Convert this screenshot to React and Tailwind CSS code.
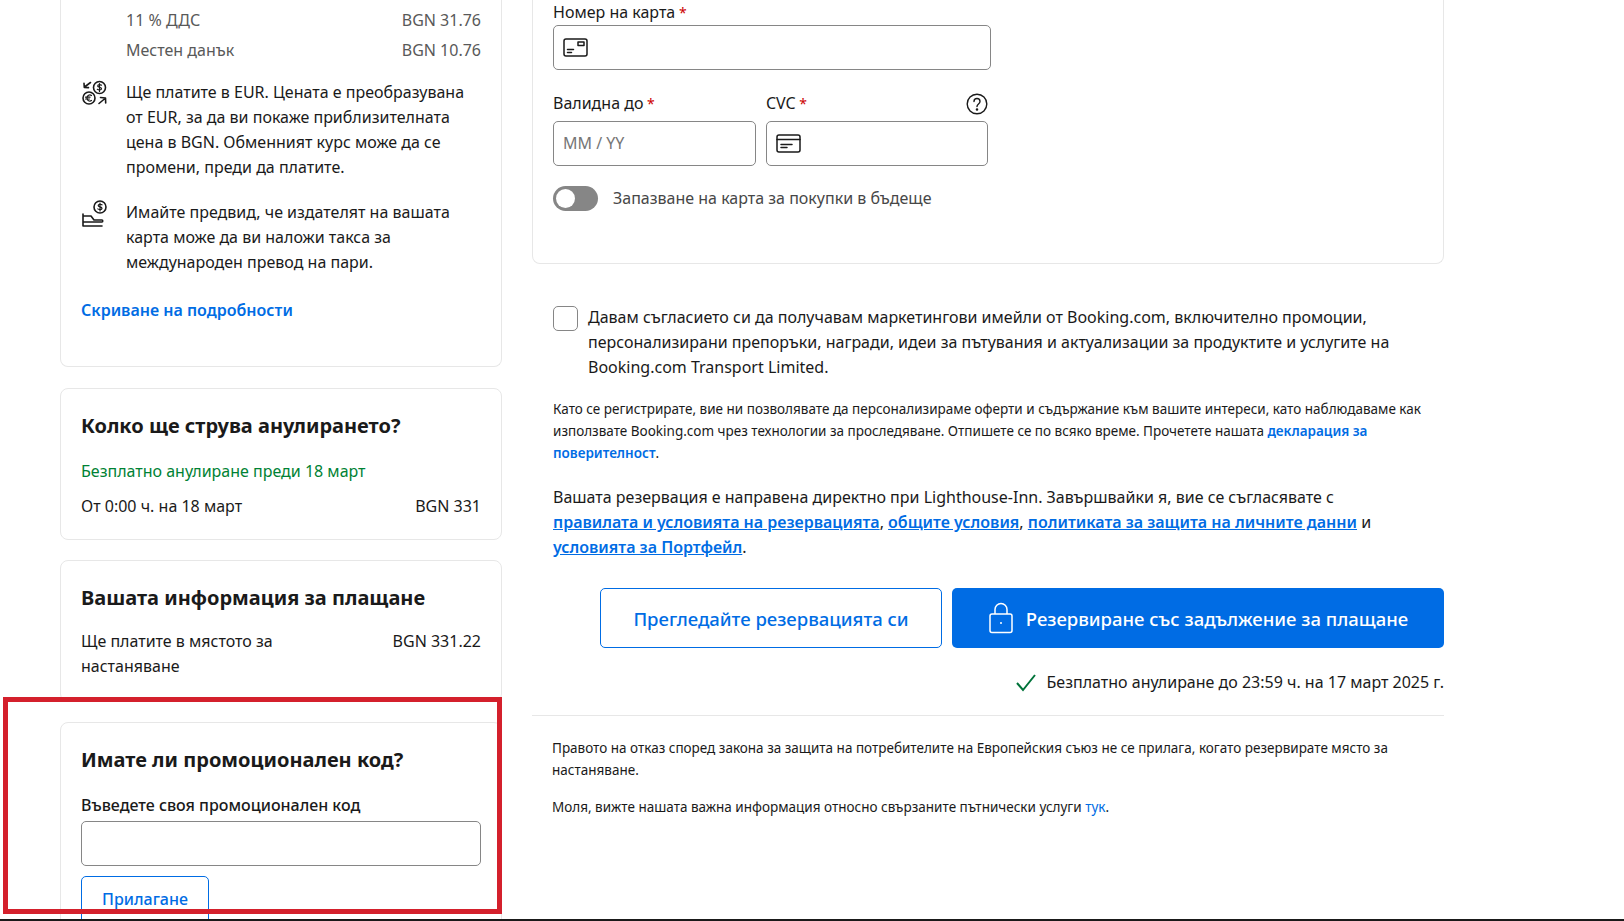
const font = { fontFamily: '"Noto Sans", sans-serif' };

const Req = () => <span className="text-[#c00] text-[14px]"> *</span>;

const LinkB = ({ children }) => (
  <a className="font-semibold text-[#006ce4] underline">{children}</a>
);

const ExchangeIcon = () => (
  <svg width="28" height="28" viewBox="0 0 28 28" fill="none" stroke="#1a1a1a" strokeWidth="1.6" strokeLinecap="round" strokeLinejoin="round">
    <circle cx="18.5" cy="7.5" r="6" />
    <path d="M20.5 5.2c-1-.9-4-.7-3.800.9.2 1.500 3.900.9 3.800 2.700-.1 1.400-3 1.500-4.200.5M18.500 3.500v8" strokeWidth="1.2" />
    <circle cx="8" cy="18" r="6" />
    <path d="M10.500 15.500c-2-1.400-4.500 0-4.500 2.500s2.500 3.900 4.500 2.500M4.500 17.200h4.500M4.500 19h4" strokeWidth="1.2" />
    <path d="M9.500 2.500l-6 4.500M3 3.200l.3 4.200 4.200.2" />
    <path d="M18 23.500l6-5M19.500 17.500l5 .5.200 5" />
  </svg>
);

const FeeIcon = () => (
  <svg width="28" height="28" viewBox="0 0 28 28" fill="none" stroke="#1a1a1a" strokeWidth="1.600" strokeLinecap="round" strokeLinejoin="round">
    <circle cx="19" cy="7" r="6" />
    <path d="M21 4.800c-1-.9-4-.7-3.800.9.2 1.500 3.900.9 3.800 2.700-.1 1.400-3 1.500-4.200.5M19 3v8" strokeWidth="1.200" />
    <path d="M2 14v12M2 16h8l3 4h8c1 0 1 2 0 2H2M2 26h19" />
  </svg>
);

const CardFrontIcon = () => (
  <svg width="26" height="20" viewBox="0 0 26 20" fill="none" stroke="#1a1a1a" strokeWidth="1.500" strokeLinecap="round" strokeLinejoin="round">
    <rect x="1" y="1" width="23" height="17" rx="2" />
    <rect x="15" y="4" width="6" height="3.500" />
    <path d="M4.500 11.500h6M4.500 14.500h4" />
  </svg>
);

const CardBackIcon = () => (
  <svg width="26" height="20" viewBox="0 0 26 20" fill="none" stroke="#1a1a1a" strokeWidth="1.500" strokeLinecap="round" strokeLinejoin="round">
    <rect x="1" y="1" width="23" height="17" rx="2" />
    <path d="M1 5.500h23M5 10.500h11M5 13.500h6" />
  </svg>
);

const HelpIcon = () => (
  <svg width="22" height="22" viewBox="0 0 22 22" fill="none" stroke="#1a1a1a" strokeWidth="1.400" strokeLinecap="round">
    <circle cx="11" cy="11" r="9.800" />
    <path d="M8 8.500c0-4 6-4 6 0 0 2.500-3 2.500-3 5" />
    <circle cx="11" cy="16.500" r=".6" fill="#1a1a1a" />
  </svg>
);

const LockIcon = () => (
  <svg width="26" height="32" viewBox="0 0 26 32" fill="none" stroke="#fff" strokeWidth="1.500" strokeLinejoin="round">
    <rect x="2" y="12" width="22" height="18.500" rx="2" />
    <path d="M7 12V7.500a6 6 0 0 1 12 0V12" />
    <circle cx="13" cy="21" r="1" fill="#fff" stroke="none" />
  </svg>
);

const CheckIcon = () => (
  <svg width="22" height="18" viewBox="0 0 22 18" fill="none" stroke="#00733a" strokeWidth="2">
    <path d="M2 9l6 7L20 1" />
  </svg>
);

const Card = ({ className = '', children }) => (
  <section className={'mx-0 rounded-lg border border-[#e7e7e7] bg-white px-[20px] ' + className}>
    {children}
  </section>
);

const PriceSummary = () => (
  <Card className="h-[367px] rounded-t-none border-t-0">
    <div className="flex justify-between pl-[45px] pt-[8px] text-[#595959]">
      <span>11 % ДДС</span>
      <span>BGN 31.76</span>
    </div>
    <div className="mt-[5px] flex justify-between pl-[45px] text-[#595959]">
      <span>Местен данък</span>
      <span>BGN 10.76</span>
    </div>
    <div className="mt-[17px] flex">
      <div className="w-[45px] shrink-0"><ExchangeIcon /></div>
      <p>Ще платите в EUR. Цената е преобразувана от EUR, за да ви покаже приблизителната цена в BGN. Обменният курс може да се промени, преди да платите.</p>
    </div>
    <div className="mt-[20px] flex">
      <div className="w-[45px] shrink-0"><FeeIcon /></div>
      <p>Имайте предвид, че издателят на вашата карта може да ви наложи такса за международен превод на пари.</p>
    </div>
    <a className="mt-[23px] block font-semibold text-[#006ce4]">Скриване на подробности</a>
  </Card>
);

const LeftColumn = () => (
  <aside className="w-[442px] shrink-0">
    <PriceSummary />
    <Card className="mt-[21px] h-[152px] pt-[22px]">
      <h2 className="text-[20px] font-bold leading-[30px]">Колко ще струва анулирането?</h2>
      <p className="mt-[18px] text-[#008234]">Безплатно анулиране преди 18 март</p>
      <div className="mt-[10px] flex justify-between">
        <span>От 0:00 ч. на 18 март</span>
        <span>BGN 331</span>
      </div>
    </Card>
    <Card className="mt-[20px] h-[142px] pt-[22px]">
      <h2 className="text-[20px] font-bold leading-[30px]">Вашата информация за плащане</h2>
      <div className="mt-[16px] flex justify-between">
        <span className="w-[240px]">Ще платите в мястото за настаняване</span>
        <span>BGN 331.22</span>
      </div>
    </Card>
    <Card className="mt-[20px] h-[220px] pt-[22px]">
      <h2 className="text-[20px] font-bold leading-[30px]">Имате ли промоционален код?</h2>
      <label className="mt-[18px] block font-medium">Въведете своя промоционален код</label>
      <div className="mt-[3px] h-[45px] rounded-[5px] border border-[#868686]" />
      <button className="mt-[10px] h-[60px] w-[128px] rounded-[5px] border border-[#006ce4] pb-[14px] font-medium text-[#006ce4]">Прилагане</button>
    </Card>
  </aside>
);

const CardForm = () => (
  <section className="h-[264px] rounded-b-lg border border-t-0 border-[#e7e7e7] px-[20px]">
    <label className="block leading-[24px]">Номер на карта<Req /></label>
    <div className="flex h-[45px] w-[438px] items-center rounded-[5px] border border-[#868686] px-[9px]"><CardFrontIcon /></div>
    <div className="mt-[21px] flex gap-[10px]">
      <div className="w-[203px]">
        <label className="block leading-[24px]">Валидна до<Req /></label>
        <div className="mt-[5px] flex h-[45px] items-center rounded-[5px] border border-[#868686] px-[9px] text-[#767676]">MM / YY</div>
      </div>
      <div className="w-[222px]">
        <div className="flex items-center justify-between">
          <label className="leading-[24px]">CVC<Req /></label>
          <HelpIcon />
        </div>
        <div className="mt-[5px] flex h-[45px] items-center rounded-[5px] border border-[#868686] px-[9px]"><CardBackIcon /></div>
      </div>
    </div>
    <div className="mt-[20px] flex items-center gap-[15px]">
      <div className="flex h-[25px] w-[45px] items-center rounded-full bg-[#868686] px-[3px]">
        <div className="h-[19px] w-[19px] rounded-full bg-white" />
      </div>
      <span className="text-[#474747]">Запазване на карта за покупки в бъдеще</span>
    </div>
  </section>
);

const RightColumn = () => (
  <main className="w-[912px] shrink-0">
    <CardForm />
    <div className="mt-[41px] flex gap-[10px] px-[21px]">
      <div className="mt-[1px] h-[25px] w-[25px] shrink-0 rounded-[5px] border border-[#868686]" />
      <p>Давам съгласието си да получавам маркетингови имейли от Booking.com, включително промоции, персонализирани препоръки, награди, идеи за пътувания и актуализации за продуктите и услугите на Booking.com Transport Limited.</p>
    </div>
    <p className="mt-[18px] px-[21px] text-[13.500px] leading-[22px]">
      Като се регистрирате, вие ни позволявате да персонализираме оферти и съдържание към вашите интереси, като наблюдаваме как използвате Booking.com чрез технологии за проследяване. Отпишете се по всяко време. Прочетете нашата <a className="font-semibold text-[#006ce4]">декларация за поверителност</a>.
    </p>
    <p className="mt-[21px] px-[21px]">
      Вашата резервация е направена директно при Lighthouse-Inn. Завършвайки я, вие се съгласявате с <LinkB>правилата и условията на резервацията</LinkB>, <LinkB>общите условия</LinkB>, <LinkB>политиката за защита на личните данни</LinkB> и <LinkB>условията за Портфейл</LinkB>.
    </p>
    <div className="mt-[28px] flex justify-end gap-[10px]">
      <button className="h-[60px] w-[342px] rounded-[5px] border border-[#006ce4] text-[18.500px] font-medium text-[#006ce4]">Прегледайте резервацията си</button>
      <button className="flex h-[60px] w-[492px] items-center justify-center gap-[12px] rounded-[5px] bg-[#006ce4] text-[18.500px] font-medium text-white">
        <LockIcon />
        Резервиране със задължение за плащане
      </button>
    </div>
    <div className="mt-[22px] flex items-center justify-end gap-[10px]">
      <CheckIcon />
      <span>Безплатно анулиране до 23:59 ч. на 17 март 2025 г.</span>
    </div>
    <hr className="mt-[20px] border-[#e7e7e7]" />
    <p className="mt-[21px] px-[20px] text-[13.500px] leading-[22px]">Правото на отказ според закона за защита на потребителите на Европейския съюз не се прилага, когато резервирате място за настаняване.</p>
    <p className="mt-[15px] px-[20px] text-[13.500px] leading-[22px]">Моля, вижте нашата важна информация относно свързаните пътнически услуги <a className="text-[#006ce4]">тук</a>.</p>
  </main>
);

export default function App() {
  return (
    <div className="relative h-[921px] w-[1624px] overflow-hidden border-b-2 border-[#1a1a1a] bg-white text-[16px] leading-[25px] text-[#1a1a1a]" style={font}>
      <div className="flex gap-[30px] pl-[60px]">
        <LeftColumn />
        <RightColumn />
      </div>
      {/* red annotation box drawn over the promo code card */}
      <div className="absolute left-[3px] top-[697px] h-[217px] w-[499px] border-[5px] border-[#d4202c]" />
    </div>
  );
}
